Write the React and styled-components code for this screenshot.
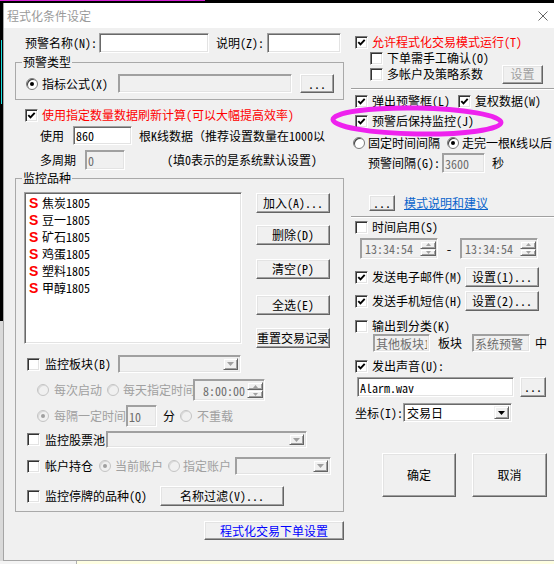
import React from 'react';
import styled, { createGlobalStyle } from 'styled-components';

const GlobalStyle = createGlobalStyle`
  html, body { margin: 0; padding: 0; background: #000; }
  body {
    font-family: "Noto Sans Mono CJK SC", "Noto Sans CJK SC", "Liberation Sans", sans-serif;
    font-size: 12px;
  }
  * { box-sizing: border-box; }
`;

const Page = styled.div`
  width: 554px;
  height: 564px;
  overflow: hidden;
  display: flex;
  flex-direction: column;
  background: #000;
`;

const TopStrip = styled.div`
  flex: none;
  height: 3px;
  background: linear-gradient(#d21fd2, #d21fd2) 0 0 / 205px 1px no-repeat, #000;
`;

const Middle = styled.div`
  flex: none;
  height: 558px;
  display: flex;
`;

const LeftStrip = styled.div`
  flex: none;
  width: 3px;
  background: linear-gradient(#19e0e0, #19e0e0) 1px 37px / 1px 64px no-repeat,
    linear-gradient(#000 0 318px, #d9d9d9 318px);
`;

const BottomStrip = styled.div`
  flex: none;
  height: 3px;
  background: linear-gradient(to right, #f4f4f4 0 76px, #b0b0b0 76px 77px, #ffffe2 77px);
`;

const Window = styled.div`
  position: relative;
  flex: none;
  width: 551px;
  display: flex;
  flex-direction: column;
  background: #f0f0f0;
  border-left: 1px solid #a5a5a5;
  border-bottom: 1px solid #a5a5a5;
`;

const TitleBar = styled.div`
  flex: none;
  height: 25px;
  display: flex;
  align-items: center;
  padding-left: 3px;
  background: #fff;
  color: #9a9a9a;
  font-size: 12px;
`;

const CloseIcon = styled.svg`
  margin-left: auto;
  margin-right: 6px;
`;

const Body = styled.div`
  flex: none;
  height: 532px;
  display: flex;
  padding-left: 11px;
  overflow: hidden;
`;

const LeftCol = styled.div`
  flex: none;
  width: 329px;
  display: flex;
  flex-direction: column;
`;

const RightCol = styled.div`
  flex: none;
  width: 203px;
  margin-left: 7px;
  display: flex;
  flex-direction: column;
  overflow: hidden;
`;

const Row = styled.div`
  flex: none;
  display: flex;
  align-items: ${p => (p.$top ? 'flex-start' : 'center')};
  justify-content: ${p => (p.$end ? 'flex-end' : 'flex-start')};
  height: ${p => p.$h}px;
  margin-top: ${p => p.$mt || 0}px;
  padding-left: ${p => p.$pl || 0}px;
  padding-right: ${p => p.$pr || 0}px;
  white-space: nowrap;
`;

const Spacer = styled.div`
  flex: 1;
`;

const Txt = styled.span`
  flex: none;
  display: block;
  white-space: nowrap;
  overflow: ${p => (p.$clip ? 'hidden' : 'visible')};
  line-height: 14px;
  width: ${p => (p.$w ? `${p.$w}px` : 'auto')};
  margin-left: ${p => p.$ml || 0}px;
  color: ${p => p.$c || '#000'};
  text-align: ${p => (p.$center ? 'center' : 'left')};
`;

const Link = styled.a`
  flex: none;
  margin-left: ${p => p.$ml || 0}px;
  color: #0a64cc;
  text-decoration: underline;
  line-height: 14px;
  cursor: pointer;
`;

const Sep = styled.div`
  flex: none;
  height: 2px;
  margin-top: ${p => p.$mt || 0}px;
  border-top: 1px solid #a0a0a0;
  border-bottom: 1px solid #fff;
`;

const Group = styled.fieldset`
  flex: none;
  margin: ${p => p.$mt || 0}px 0 0 0;
  padding: 0;
  min-width: 0;
  border: 1px solid #a9a9a9;
`;

const Legend = styled.legend`
  margin-left: 6px;
  padding: 0 1px;
  height: 14px;
  line-height: 14px;
  font-size: 12px;
  color: #000;
`;

const GroupBody = styled.div`
  display: flex;
  flex-direction: column;
  padding: ${p => p.$pt || 0}px 0 ${p => p.$pb || 0}px ${p => p.$pl || 0}px;
`;

const CheckBox = styled.span`
  flex: none;
  width: 13px;
  height: 13px;
  margin-left: ${p => p.$ml || 0}px;
  background: #fff;
  border: 1px solid;
  border-color: #7a7a7a #fff #fff #7a7a7a;
  box-shadow: inset 1px 1px #333, inset -1px -1px #e3e3e3;
  display: flex;
  align-items: center;
  justify-content: center;
`;

function Check({ on, ml }) {
  return (
    <CheckBox $ml={ml}>
      {on && (
        <svg width="9" height="9" viewBox="0 0 9 9">
          <path d="M1.3 4.1 L3.5 6.4 L7.7 1.8" fill="none" stroke="#000" strokeWidth="1.9" />
        </svg>
      )}
    </CheckBox>
  );
}

const Radio = styled.span`
  flex: none;
  position: relative;
  width: 12px;
  height: 12px;
  border-radius: 50%;
  margin-left: ${p => p.$ml || 0}px;
  background: ${p => (p.$off ? '#f0f0f0' : '#fff')};
  border: 1px solid ${p => (p.$off ? '#c4c4c4' : '#7a7a7a')};
  box-shadow: inset 1px 1px ${p => (p.$off ? '#dadada' : '#404040')};
  &::after {
    content: '';
    display: ${p => (p.$on ? 'block' : 'none')};
    position: absolute;
    left: 3px;
    top: 3px;
    width: 4px;
    height: 4px;
    border-radius: 50%;
    background: ${p => (p.$off ? '#a0a0a0' : '#000')};
  }
`;

const Field = styled.input.attrs({ readOnly: true, type: 'text' })`
  flex: none;
  width: ${p => p.$w}px;
  height: ${p => p.$h || 20}px;
  margin: 0 0 0 ${p => p.$ml || 0}px;
  padding: 0 2px;
  font: inherit;
  font-size: 12px;
  line-height: 14px;
  color: #000;
  background: #fff;
  border: 1px solid;
  border-color: #a0a0a0 #fff #fff #a0a0a0;
  box-shadow: inset 1px 1px #696969, inset -1px -1px #e3e3e3;
  outline: none;
  &:disabled {
    color: #6d6d6d;
    background: #f0f0f0;
    box-shadow: inset 1px 1px #a0a0a0, inset -1px -1px #e3e3e3;
  }
`;

const Btn = styled.button`
  flex: none;
  width: ${p => p.$w}px;
  height: ${p => p.$h || 20}px;
  margin: ${p => p.$mt || 0}px 0 0 ${p => p.$ml || 0}px;
  padding: 0;
  font: inherit;
  font-size: 12px;
  line-height: 14px;
  color: ${p => p.$c || '#000'};
  background: #f0f0f0;
  border: 1px solid;
  border-color: #fff #646464 #646464 #fff;
  box-shadow: inset -1px -1px #a0a0a0, inset 1px 1px #e3e3e3;
  white-space: nowrap;
  &:disabled {
    color: #a0a0a0;
  }
`;

const ComboBox = styled.div`
  flex: none;
  width: ${p => p.$w}px;
  height: ${p => p.$h}px;
  margin-left: ${p => p.$ml || 0}px;
  display: flex;
  align-items: stretch;
  padding: 2px;
  background: ${p => (p.$off ? '#f0f0f0' : '#fff')};
  border: 1px solid;
  border-color: #a0a0a0 #fff #fff #a0a0a0;
  box-shadow: inset 1px 1px ${p => (p.$off ? '#a0a0a0' : '#696969')}, inset -1px -1px #e3e3e3;
`;

const ComboText = styled.span`
  flex: 1;
  display: flex;
  align-items: center;
  padding-left: 1px;
  white-space: nowrap;
  color: #000;
`;

const MiniBtn = styled.span`
  flex: ${p => (p.$grow ? 1 : 'none')};
  width: ${p => p.$w || 15}px;
  display: flex;
  align-items: center;
  justify-content: center;
  background: #f0f0f0;
  border: 1px solid;
  border-color: #f0f0f0 #646464 #646464 #f0f0f0;
  box-shadow: inset 1px 1px #fff, inset -1px -1px #a0a0a0;
`;

function Combo({ w, h, ml, off, text }) {
  const c = off ? '#a0a0a0' : '#000';
  return (
    <ComboBox $w={w} $h={h} $ml={ml} $off={off}>
      <ComboText>{text}</ComboText>
      <MiniBtn>
        <svg width="7" height="4" viewBox="0 0 7 4">
          <path d="M0 0 H7 L3.5 4 Z" fill={c} />
        </svg>
      </MiniBtn>
    </ComboBox>
  );
}

const SpinBox = styled.div`
  flex: none;
  width: ${p => p.$w}px;
  height: ${p => p.$h}px;
  display: flex;
  align-items: stretch;
  padding: 2px 1px 2px 2px;
  background: #f0f0f0;
  border: 1px solid;
  border-color: #a0a0a0 #fff #fff #a0a0a0;
  box-shadow: inset 1px 1px #a0a0a0, inset -1px -1px #e3e3e3;
`;

const SpinText = styled.span`
  flex: 1;
  display: flex;
  align-items: center;
  justify-content: ${p => (p.$right ? 'flex-end' : 'flex-start')};
  padding: 0 2px;
  color: #6d6d6d;
  white-space: nowrap;
`;

const SpinBtns = styled.div`
  flex: none;
  width: 16px;
  display: flex;
  flex-direction: column;
`;

function Spinner({ w, h, text, right }) {
  return (
    <SpinBox $w={w} $h={h}>
      <SpinText $right={right}>{text}</SpinText>
      <SpinBtns>
        <MiniBtn $grow $w={16}>
          <svg width="5" height="3" viewBox="0 0 5 3">
            <path d="M0 3 H5 L2.5 0 Z" fill="#a0a0a0" />
          </svg>
        </MiniBtn>
        <MiniBtn $grow $w={16}>
          <svg width="5" height="3" viewBox="0 0 5 3">
            <path d="M0 0 H5 L2.5 3 Z" fill="#a0a0a0" />
          </svg>
        </MiniBtn>
      </SpinBtns>
    </SpinBox>
  );
}

const ListBox = styled.div`
  flex: none;
  width: 218px;
  height: 152px;
  display: flex;
  flex-direction: column;
  padding: 0 0 0 4px;
  background: #fff;
  border: 1px solid;
  border-color: #a0a0a0 #fff #fff #a0a0a0;
  box-shadow: inset 1px 1px #696969, inset -1px -1px #e3e3e3;
`;

const ListInner = styled.div`
  display: flex;
  flex-direction: column;
  padding-top: 1px;
`;

const ListItem = styled.div`
  height: 17px;
  display: flex;
  align-items: center;
`;

const SMark = styled.span`
  flex: none;
  width: 13px;
  color: #f00;
  font-family: "Liberation Sans", "DejaVu Sans", sans-serif;
  font-weight: bold;
  font-size: 14px;
  line-height: 14px;
`;

const BtnCol = styled.div`
  flex: none;
  display: flex;
  flex-direction: column;
  margin-left: 14px;
`;

const Annotation = styled.svg`
  position: absolute;
  left: 320px;
  top: 98px;
  pointer-events: none;
`;

const RED = '#ff0000';
const GRAY = '#a0a0a0';

const items = ['焦炭1805', '豆一1805', '矿石1805', '鸡蛋1805', '塑料1805', '甲醇1805'];

export default function App() {
  return (
    <>
      <GlobalStyle />
      <Page>
        <TopStrip />
        <Middle>
          <LeftStrip />
          <Window>
            <TitleBar>
              程式化条件设定
              <CloseIcon width="10" height="10" viewBox="0 0 10 10">
                <path d="M0.5 0.5 L9.5 9.5 M9.5 0.5 L0.5 9.5" stroke="#666" strokeWidth="1" fill="none" />
              </CloseIcon>
            </TitleBar>
            <Body>
              <LeftCol>
                <Row $h={20} $mt={5} $pl={10}>
                  <Txt $w={74}>预警名称(N):</Txt>
                  <Field $w={110} defaultValue="" />
                  <Txt $w={51} $ml={7}>说明(Z):</Txt>
                  <Field $w={74} defaultValue="" />
                </Row>

                <Group $mt={2}>
                  <Legend>预警类型</Legend>
                  <GroupBody $pt={5} $pb={6} $pl={10}>
                    <Row $h={19}>
                      <Radio $on />
                      <Txt $w={66} $ml={4}>指标公式(X)</Txt>
                      <Field $w={174} $h={19} $ml={10} disabled defaultValue="" />
                      <Btn $w={34} $h={19} $ml={8}>...</Btn>
                    </Row>
                  </GroupBody>
                </Group>

                <Row $h={14} $mt={8} $pl={10}>
                  <Check on />
                  <Txt $ml={4} $c={RED}>使用指定数量数据刷新计算(可以大幅提高效率)</Txt>
                </Row>

                <Row $h={19} $mt={4} $pl={25}>
                  <Txt $w={33}>使用</Txt>
                  <Field $w={59} $h={19} defaultValue="860" />
                  <Txt $w={186} $ml={7} $clip>根K线数据（推荐设置数量在1000以内）</Txt>
                </Row>

                <Row $h={20} $mt={5} $pl={25}>
                  <Txt $w={45}>多周期</Txt>
                  <Field $w={40} disabled defaultValue="0" />
                  <Txt $ml={42}>(填0表示的是系统默认设置)</Txt>
                </Row>

                <Group $mt={1}>
                  <Legend>监控品种</Legend>
                  <GroupBody $pt={7} $pb={5}>
                    <Row $h={156} $pl={8} $top>
                      <ListBox>
                        <ListInner>
                          {items.map(it => (
                            <ListItem key={it}>
                              <SMark>S</SMark>
                              <Txt>{it}</Txt>
                            </ListItem>
                          ))}
                        </ListInner>
                      </ListBox>
                      <BtnCol>
                        <Btn $w={74} $mt={1}>加入(A)...</Btn>
                        <Btn $w={74} $mt={12}>删除(D)</Btn>
                        <Btn $w={74} $mt={14}>清空(P)</Btn>
                        <Btn $w={74} $mt={16}>全选(E)</Btn>
                        <Btn $w={74} $mt={13}>重置交易记录</Btn>
                      </BtnCol>
                    </Row>

                    <Row $h={18} $mt={7} $pl={11}>
                      <Check />
                      <Txt $w={73} $ml={5}>监控板块(B)</Txt>
                      <Combo w={123} h={18} off text="" />
                    </Row>

                    <Row $h={22} $mt={6} $pl={21}>
                      <Radio $off />
                      <Txt $w={48} $ml={5} $c={GRAY}>每次启动</Txt>
                      <Radio $off $ml={5} />
                      <Txt $w={70} $ml={4} $c={GRAY} $clip>每天指定时间</Txt>
                      <Spinner w={72} h={22} text="8:00:00" right />
                    </Row>

                    <Row $h={22} $mt={4} $pl={21}>
                      <Radio $off $on />
                      <Txt $w={72} $ml={5} $c={GRAY}>每隔一定时间</Txt>
                      <Field $w={31} $h={22} disabled defaultValue="10" />
                      <Txt $ml={6}>分</Txt>
                      <Radio $off $ml={5} />
                      <Txt $ml={5} $c={GRAY}>不重载</Txt>
                    </Row>

                    <Row $h={17} $mt={4} $pl={11}>
                      <Check />
                      <Txt $w={61} $ml={5}>监控股票池</Txt>
                      <Combo w={201} h={17} off text="" />
                    </Row>

                    <Row $h={18} $mt={9} $pl={11}>
                      <Check />
                      <Txt $w={48} $ml={5}>帐户持仓</Txt>
                      <Radio $off $on $ml={6} />
                      <Txt $w={48} $ml={4} $c={GRAY}>当前账户</Txt>
                      <Radio $off $ml={5} />
                      <Txt $w={48} $ml={3} $c={GRAY}>指定账户</Txt>
                      <Combo w={96} h={18} ml={4} off text="" />
                    </Row>

                    <Row $h={20} $mt={11} $pl={11}>
                      <Check />
                      <Txt $w={115} $ml={5}>监控停牌的品种(Q)</Txt>
                      <Btn $w={124}>名称过滤(V)...</Btn>
                    </Row>
                  </GroupBody>
                </Group>

                <Row $h={19} $mt={9} $end>
                  <Btn $w={140} $h={19} $c="#0000ff">程式化交易下单设置</Btn>
                </Row>
              </LeftCol>

              <RightCol>
                <Row $h={14} $mt={7} $pl={4}>
                  <Check on />
                  <Txt $ml={4} $c={RED}>允许程式化交易模式运行(T)</Txt>
                </Row>
                <Row $h={14} $mt={2} $pl={19}>
                  <Check />
                  <Txt $ml={4}>下单需手工确认(O)</Txt>
                </Row>
                <Row $h={20} $mt={-1} $pl={19} $pr={11}>
                  <Check />
                  <Txt $ml={4}>多帐户及策略系数</Txt>
                  <Spacer />
                  <Btn $w={41} $h={19} disabled>设置</Btn>
                </Row>
                <Sep $mt={4} />
                <Row $h={14} $mt={4} $pl={4}>
                  <Check on />
                  <Txt $w={78} $ml={4}>弹出预警框(L)</Txt>
                  <Check on ml={8} />
                  <Txt $ml={4}>复权数据(W)</Txt>
                </Row>
                <Row $h={14} $mt={6} $pl={4}>
                  <Check on />
                  <Txt $ml={4}>预警后保持监控(J)</Txt>
                </Row>
                <Row $h={14} $mt={8} $pl={2}>
                  <Radio />
                  <Txt $w={72} $ml={3}>固定时间间隔</Txt>
                  <Radio $on $ml={7} />
                  <Txt $ml={3}>走完一根K线以后</Txt>
                </Row>
                <Row $h={20} $mt={3} $pl={17}>
                  <Txt $w={74}>预警间隔(G):</Txt>
                  <Field $w={43} disabled defaultValue="3600" />
                  <Txt $ml={7}>秒</Txt>
                </Row>
                <Row $h={16} $mt={22} $pl={18}>
                  <Btn $w={26} $h={16}>...</Btn>
                  <Link $ml={9}>模式说明和建议</Link>
                </Row>
                <Sep $mt={5} />
                <Row $h={14} $mt={2} $pl={4}>
                  <Check />
                  <Txt $ml={4}>时间启用(S)</Txt>
                </Row>
                <Row $h={21} $mt={4} $pl={9}>
                  <Spinner w={78} h={21} text="13:34:54" />
                  <Txt $w={22} $center>-</Txt>
                  <Spinner w={78} h={21} text="13:34:54" />
                </Row>
                <Row $h={20} $mt={8} $pl={4}>
                  <Check on />
                  <Txt $w={93} $ml={4}>发送电子邮件(M)</Txt>
                  <Btn $w={74}>设置(1)...</Btn>
                </Row>
                <Row $h={20} $mt={4} $pl={4}>
                  <Check on />
                  <Txt $w={93} $ml={4}>发送手机短信(H)</Txt>
                  <Btn $w={74}>设置(2)...</Btn>
                </Row>
                <Row $h={14} $mt={8} $pl={4}>
                  <Check />
                  <Txt $ml={4}>输出到分类(K)</Txt>
                </Row>
                <Row $h={18} $mt={1} $pl={22}>
                  <Field $w={57} $h={18} disabled defaultValue="其他板块1" />
                  <Txt $w={24} $ml={8}>板块</Txt>
                  <Field $w={58} $h={18} $ml={10} disabled defaultValue="系统预警" />
                  <Txt $ml={5}>中</Txt>
                </Row>
                <Row $h={14} $mt={7} $pl={4}>
                  <Check on />
                  <Txt $ml={4}>发出声音(U):</Txt>
                </Row>
                <Row $h={20} $mt={4} $pl={6}>
                  <Field $w={157} defaultValue="Alarm.wav" />
                  <Btn $w={26} $ml={6}>...</Btn>
                </Row>
                <Row $h={19} $mt={6} $pl={4}>
                  <Txt $w={48}>坐标(I):</Txt>
                  <Combo w={109} h={19} text="交易日" />
                </Row>
                <Row $h={44} $mt={31} $pl={31}>
                  <Btn $w={74} $h={44}>确定</Btn>
                  <Btn $w={75} $h={44} $ml={16}>取消</Btn>
                </Row>
              </RightCol>
            </Body>
            <Annotation width="190" height="40" viewBox="0 0 190 40">
              <ellipse cx="93" cy="20" rx="84" ry="13" fill="none" stroke="#ee22ee" strokeWidth="5" transform="rotate(1 93 20)" />
            </Annotation>
          </Window>
        </Middle>
        <BottomStrip />
      </Page>
    </>
  );
}
